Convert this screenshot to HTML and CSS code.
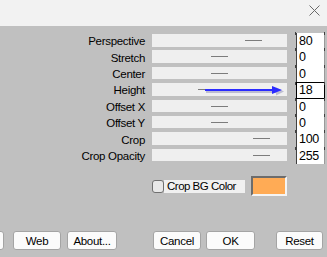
FILE: index.html
```html
<!DOCTYPE html>
<html lang="en">

<head>
    <meta charset="UTF-8">
    <title>Perspective</title>
    <link rel="stylesheet" href="styles.css">
</head>

<body>
    <div class="titlebar">
        <svg class="close" width="11" height="11" viewBox="0 0 11 11">
            <path d="M0.5 0.5 L10.5 10.5 M10.5 0.5 L0.5 10.5" stroke="#6a6a6a" stroke-width="1" fill="none" />
        </svg>
    </div>

    <div class="panel">
        <div class="params">
            <span class="name">Perspective</span>
            <div class="track"><span class="thumb" style="left: 93px"></span></div>
            <div class="field">80</div>

            <span class="name">Stretch</span>
            <div class="track"><span class="thumb" style="left: 59px"></span></div>
            <div class="field">0</div>

            <span class="name">Center</span>
            <div class="track"><span class="thumb" style="left: 59px"></span></div>
            <div class="field">0</div>

            <span class="name">Height</span>
            <div class="track"><span class="thumb" style="left: 46px"></span></div>
            <div class="field focus">18</div>

            <span class="name">Offset X</span>
            <div class="track"><span class="thumb" style="left: 59px"></span></div>
            <div class="field">0</div>

            <span class="name">Offset Y</span>
            <div class="track"><span class="thumb" style="left: 59px"></span></div>
            <div class="field">0</div>

            <span class="name">Crop</span>
            <div class="track"><span class="thumb" style="left: 101px"></span></div>
            <div class="field">100</div>

            <span class="name">Crop Opacity</span>
            <div class="track"><span class="thumb" style="left: 101px"></span></div>
            <div class="field">255</div>
        </div>

        <!-- pointer over the Height slider -->
        <svg class="arrow" width="82" height="12" viewBox="0 0 82 12">
            <path d="M2 6.5 H72" stroke="rgba(40,40,120,.25)" stroke-width="3" />
            <path d="M72 2.5 L80 6.5 L72 10.5 Z" fill="rgba(40,40,120,.25)" />
            <path d="M1 5 H70" stroke="#2b2bff" stroke-width="2" />
            <path d="M68 1 L78 5 L68 9 Z" fill="#2b2bff" />
        </svg>

        <div class="bgrow">
            <span class="check"></span>
            <span class="checklabel">Crop BG Color</span>
            <span class="swatch"></span>
        </div>

        <div class="buttons">
            <button class="btn cut"></button>
            <button class="btn web">Web</button>
            <button class="btn about">About...</button>
            <button class="btn cancel">Cancel</button>
            <button class="btn ok">OK</button>
            <button class="btn reset">Reset</button>
        </div>
    </div>
</body>

</html>
```

FILE: styles.css
```css
html,
body {
    margin: 0;
    width: 327px;
    height: 257px;
    overflow: hidden;
}

body {
    font: 11.5px "Liberation Sans", Arial, sans-serif;
    color: #000;
}

.titlebar {
    height: 26px;
    background: #f2f2f2;
    display: flex;
    justify-content: flex-end;
    align-items: flex-start;
    padding-right: 7px;
    box-sizing: border-box;
}

.close {
    margin-top: 5px;
}

.panel {
    position: relative;
    height: 231px;
    background: #c0c0c0;
    padding-top: 7px;
    box-sizing: border-box;
}

.params {
    display: grid;
    grid-template-columns: 152px 144px 29px;
    grid-auto-rows: 16.4px;
}

.name {
    text-align: right;
    padding-right: 7px;
    letter-spacing: -0.3px;
    align-self: center;
}

.track {
    position: relative;
    width: 135px;
    height: 12.5px;
    margin-top: 1px;
    background: #efefef;
}

.thumb {
    position: absolute;
    top: 6px;
    width: 17px;
    height: 1px;
    background: #7c7c7c;
}

.field {
    position: relative;
    background: #fff;
    border-left: 1px solid #404040;
    border-right: 1px solid #9a9a9a;
    padding-left: 2px;
    font-size: 12.5px;
    line-height: 16.4px;
    letter-spacing: -0.3px;
}

/* small marks where two edit boxes meet */
.field::before,
.field::after {
    content: "";
    position: absolute;
    top: -1px;
    width: 1px;
    height: 3px;
    background: #404040;
}

.field::before {
    left: -2px;
}

.field::after {
    right: -1px;
}

.field.focus {
    border: 1px solid #000;
    line-height: 14.4px;
}

.arrow {
    position: absolute;
    left: 204px;
    top: 59px;
}

.bgrow {
    display: flex;
    align-items: center;
    margin: 12px 0 0 152px;
    height: 20px;
}

.check {
    width: 10px;
    height: 11px;
    border: 1px solid #707070;
    border-radius: 3px;
    background: #e8e8e8;
}

.checklabel {
    width: 78px;
    height: 13px;
    line-height: 13px;
    padding-left: 3px;
    background: #f0f0f0;
    letter-spacing: -0.5px;
}

.swatch {
    margin-left: 6px;
    width: 32px;
    height: 16px;
    background: #ffab55;
    border: 2px solid #6c6c6c;
    border-right-color: #f4f4f4;
    border-bottom-color: #f4f4f4;
}

.buttons {
    display: flex;
    margin-top: 35px;
    height: 19px;
}

.btn {
    height: 19px;
    padding: 0;
    font: 11.5px "Liberation Sans", Arial, sans-serif;
    letter-spacing: -0.3px;
    color: #000;
    background: #fbfbfb;
    border: 1px solid #a4a4a4;
    border-radius: 3px;
}

.cut {
    width: 20px;
    margin-left: -16px;
}

.web {
    width: 48px;
    margin-left: 9px;
}

.about {
    width: 50px;
    margin-left: 6px;
}

.cancel {
    width: 48px;
    margin-left: 36px;
}

.ok {
    width: 49px;
    margin-left: 5px;
}

.reset {
    width: 47px;
    margin-left: 21px;
}
```
